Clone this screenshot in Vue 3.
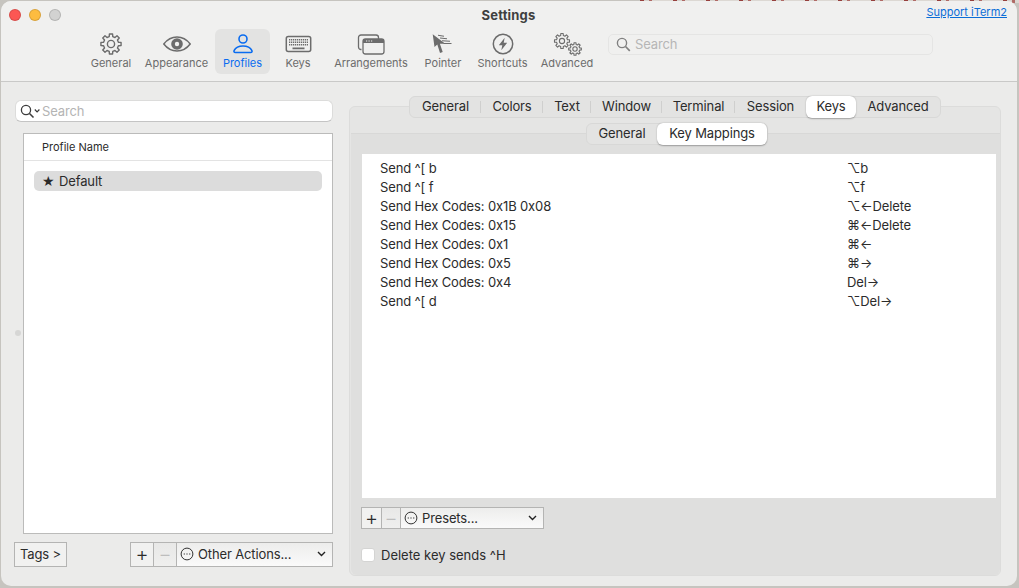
<template>
  <div class="desktop">
    <div class="terminal-peek"></div>
    <div class="window">
      <header class="toolbar">
        <div class="titlebar">
          <div class="lights">
            <span class="light red"></span>
            <span class="light yellow"></span>
            <span class="light grey"></span>
          </div>
          <div class="title">Settings</div>
          <a class="support">Support iTerm2</a>
        </div>
        <div class="tools">
          <div
            v-for="t in tools"
            :key="t.name"
            class="tool"
            :class="{ active: t.name === 'Profiles' }"
            :style="{ width: t.width + 'px' }"
          >
            <svg class="tool-icon" width="30" height="24" viewBox="0 0 30 24" fill="none" stroke="currentColor">
              <template v-if="t.name === 'General'">
                <path :d="gear(15, 12, 10.2, 7.6, 8)" stroke-width="1.4" stroke-linejoin="round" />
                <circle cx="15" cy="12" r="3.6" stroke-width="1.4" />
              </template>
              <template v-else-if="t.name === 'Appearance'">
                <path d="M1.8 12C5.5 7.2 10 5 15 5s9.500 2.200 13.200 7C24.500 16.800 20 19 15 19S5.500 16.800 1.800 12Z" stroke-width="1.5" />
                <circle cx="15" cy="12" r="5.800" fill="currentColor" stroke="none" />
                <circle cx="15" cy="12" r="2.200" fill="#f0f0ef" stroke="none" />
              </template>
              <template v-else-if="t.name === 'Profiles'">
                <circle cx="15" cy="7" r="4" stroke-width="1.600" />
                <path d="M7.500 20.500c-1.500 0-1.900-1-1.300-2.200 1.400-2.800 4.600-4.300 8.800-4.300s7.400 1.500 8.800 4.300c.6 1.200.2 2.200-1.300 2.200Z" stroke-width="1.600" />
              </template>
              <template v-else-if="t.name === 'Keys'">
                <rect x="3.300" y="4.500" width="24.400" height="15" rx="2" stroke-width="1.500" />
                <path d="M6 7.700h19M6 10.200h19M6 12.700h19" stroke-width="1.600" stroke-dasharray="1.300 .7" />
                <path d="M9.500 16.300h12" stroke-width="1.800" />
              </template>
              <template v-else-if="t.name === 'Arrangements'">
                <path d="M5.500 17.500H5a2.500 2.500 0 0 1-2.500-2.500V5.500A2.500 2.500 0 0 1 5 3h15a2.500 2.500 0 0 1 2.500 2.500V7" stroke-width="1.300" />
                <rect x="7" y="7" width="21" height="15" rx="2.500" stroke-width="1.300" />
                <path d="M7 8.500a1.500 1.500 0 0 1 1.500-1.500h18a1.500 1.500 0 0 1 1.500 1.500V11H7Z" fill="currentColor" stroke="none" />
                <path d="M10 9h1.200M12.500 9h1.200M15 9h1.200" stroke="#f0f0ef" stroke-width="1.200" />
              </template>
              <template v-else-if="t.name === 'Pointer'">
                <path d="M4.700 2.300 6.500 15 9.300 12.600 12 21l2.700-1-2.800-8.200 5.400-.1Z" fill="currentColor" stroke="none" />
                <path d="M10 3.200l6 1M12 6l7 .8M14 8.800l8 .5M15.500 11.500h8" stroke-width="1.100" />
              </template>
              <template v-else-if="t.name === 'Shortcuts'">
                <circle cx="15" cy="12" r="9.700" stroke-width="1.500" />
                <path d="M16.700 5.800 10.800 13.200h3.500l-1 5 5.900-7.400h-3.500Z" fill="currentColor" stroke="none" />
              </template>
              <template v-else-if="t.name === 'Advanced'">
                <path :d="gear(10, 9, 7.600, 5.600, 8)" stroke-width="1.100" stroke-linejoin="round" />
                <circle cx="10" cy="9" r="2.600" stroke-width="1.100" />
                <path :d="gear(23, 17, 6.400, 4.700, 8)" stroke-width="1.100" stroke-linejoin="round" />
                <circle cx="23" cy="17" r="2.200" stroke-width="1.100" />
              </template>
            </svg>
            <span class="tool-label">{{ t.name }}</span>
          </div>
          <div class="tool-search">
            <svg width="15" height="15" viewBox="0 0 15 15" fill="none" stroke="#808080" stroke-width="1.400">
              <circle cx="6" cy="6" r="4.600" />
              <path d="m9.500 9.500 4.300 4.300" stroke-width="1.700" />
            </svg>
            <span>Search</span>
          </div>
        </div>
      </header>

      <div class="content">
        <span class="splitter"></span>
        <section class="profiles">
          <div class="profile-search">
            <svg width="20" height="15" viewBox="0 0 20 15" fill="none" stroke="#3c3c3c">
              <circle cx="6" cy="6" r="4.600" stroke-width="1.300" />
              <path d="m9.500 9.500 4 4" stroke-width="1.600" />
              <path d="m14.800 5.500 2.300 2.300 2.300-2.300" stroke-width="1.200" />
            </svg>
            <span>Search</span>
          </div>
          <div class="profile-table">
            <div class="profile-head">Profile Name</div>
            <div class="profile-row">
              <span class="star">★</span>
              <span>Default</span>
            </div>
          </div>
          <div class="profile-actions">
            <button class="btn tags">Tags &gt;</button>
            <div class="group">
              <button class="btn plus">+</button>
              <button class="btn minus">−</button>
              <div class="btn popup">
                <svg width="16" height="16" viewBox="0 0 16 16" fill="none" stroke="#333">
                  <circle cx="8" cy="8" r="5.900" stroke-width="1" />
                  <path d="M4.700 8h1.200M7.400 8h1.200M10.100 8h1.200" stroke-width="1.200" />
                </svg>
                <span class="popup-text">Other Actions...</span>
                <svg class="chev" width="9" height="6" viewBox="0 0 9 6" fill="none" stroke="#222" stroke-width="1.400">
                  <path d="m1 1 3.500 3.500L8 1" />
                </svg>
              </div>
            </div>
          </div>
        </section>

        <section class="panel">
          <div class="seg tabs">
            <span
              v-for="(t, i) in tabs"
              :key="t.name"
              class="seg-item"
              :class="{ on: t.name === 'Keys', sep: i < 5 }"
              :style="{ width: t.width + 'px' }"
            >{{ t.name }}</span>
          </div>
          <div class="inner">
            <div class="seg subtabs">
              <span class="seg-item general">General</span>
              <span class="seg-item on mappings">Key Mappings</span>
            </div>
            <div class="mappings-table">
              <div v-for="m in mappings" :key="m.action + m.key" class="mapping">
                <span>{{ m.action }}</span>
                <span class="combo">{{ m.key }}</span>
              </div>
            </div>
            <div class="group presets">
              <button class="btn plus">+</button>
              <button class="btn minus">−</button>
              <div class="btn popup">
                <svg width="16" height="16" viewBox="0 0 16 16" fill="none" stroke="#333">
                  <circle cx="8" cy="8" r="5.900" stroke-width="1" />
                  <path d="M4.700 8h1.200M7.400 8h1.200M10.100 8h1.200" stroke-width="1.200" />
                </svg>
                <span class="popup-text">Presets...</span>
                <svg class="chev" width="9" height="6" viewBox="0 0 9 6" fill="none" stroke="#222" stroke-width="1.400">
                  <path d="m1 1 3.500 3.500L8 1" />
                </svg>
              </div>
            </div>
            <label class="check">
              <span class="box"></span>
              <span class="check-label">Delete key sends ^H</span>
            </label>
          </div>
        </section>
      </div>
    </div>
  </div>
</template>

<script setup>
const tools = [
  { name: 'General', width: 54 },
  { name: 'Appearance', width: 77 },
  { name: 'Profiles', width: 55 },
  { name: 'Keys', width: 56 },
  { name: 'Arrangements', width: 90 },
  { name: 'Pointer', width: 54 },
  { name: 'Shortcuts', width: 65 },
  { name: 'Advanced', width: 64 },
]

const tabs = [
  { name: 'General', width: 71 },
  { name: 'Colors', width: 62 },
  { name: 'Text', width: 48 },
  { name: 'Window', width: 71 },
  { name: 'Terminal', width: 73 },
  { name: 'Session', width: 71 },
  { name: 'Keys', width: 50 },
  { name: 'Advanced', width: 84 },
]

const mappings = [
  { action: 'Send ^[ b', key: '⌥b' },
  { action: 'Send ^[ f', key: '⌥f' },
  { action: 'Send Hex Codes: 0x1B 0x08', key: '⌥←Delete' },
  { action: 'Send Hex Codes: 0x15', key: '⌘←Delete' },
  { action: 'Send Hex Codes: 0x1', key: '⌘←' },
  { action: 'Send Hex Codes: 0x5', key: '⌘→' },
  { action: 'Send Hex Codes: 0x4', key: 'Del→' },
  { action: 'Send ^[ d', key: '⌥Del→' },
]

// outline of a cog wheel, used by the General and Advanced icons
function gear(cx, cy, outer, inner, teeth) {
  const step = (Math.PI * 2) / teeth
  const pts = []
  for (let i = 0; i < teeth; i++) {
    const a = i * step - Math.PI / 2
    const w = step * 0.2
    const v = step * 0.3
    pts.push([a - v, inner], [a - w, outer], [a + w, outer], [a + v, inner])
  }
  return (
    'M' +
    pts
      .map(([a, r]) => (cx + Math.cos(a) * r).toFixed(2) + ' ' + (cy + Math.sin(a) * r).toFixed(2))
      .join('L') +
    'Z'
  )
}
</script>

<style>
html,
body {
  margin: 0;
  overflow: hidden;
}
</style>

<style scoped>
.desktop {
  position: relative;
  box-sizing: border-box;
  width: 1019px;
  height: 588px;
  padding: 1px 2px 2px 1px;
  background: #c6c4bf;
  font-family: Inter, "DejaVu Sans", sans-serif;
  font-size: 13px;
  letter-spacing: -0.13px;
  color: #2b2b2b;
}

.terminal-peek {
  position: absolute;
  top: 0;
  left: 640px;
  right: 0;
  height: 3px;
  background: repeating-linear-gradient(90deg, #96403d 0 4px, #d6d2cd 4px 9px, #b06a66 9px 12px, #dcd8d3 12px 33px);
}

.window {
  position: relative;
  display: flex;
  flex-direction: column;
  height: 100%;
  border-radius: 10px;
  overflow: hidden;
  background: #ebebea;
}

.toolbar {
  flex: none;
  height: 80px;
  background: #f0f0ef;
  border-bottom: 1px solid #c9c9c8;
}

.titlebar {
  display: grid;
  grid-template-columns: 1fr auto 1fr;
  align-items: center;
  height: 28px;
}

.lights {
  display: flex;
  gap: 8px;
  padding-left: 8px;
}

.light {
  box-sizing: border-box;
  width: 12px;
  height: 12px;
  border-radius: 50%;
  border: 0.5px solid rgba(0, 0, 0, 0.14);
}

.red {
  background: #fc5753;
}

.yellow {
  background: #fdbc40;
}

.grey {
  background: #d2d2d1;
}

.title {
  font-weight: 700;
  letter-spacing: 0.2px;
  color: #3f3f3f;
  margin-left: -1px;
}

.support {
  justify-self: end;
  margin-right: 10px;
  margin-top: -6px;
  font-size: 11px;
  letter-spacing: 0;
  color: #0b6dd7;
  text-decoration: underline;
}

.tools {
  display: flex;
  align-items: flex-start;
  padding-left: 83px;
}

.tool {
  display: flex;
  flex-direction: column;
  align-items: center;
  flex: none;
  height: 45px;
  padding-top: 3px;
  box-sizing: border-box;
  border-radius: 6px;
  color: #6c6c6c;
}

.tool.active {
  background: #e3e3e2;
  color: #0a6cf0;
}

.tool-label {
  margin-top: 1px;
  font-size: 11px;
  line-height: 13px;
  letter-spacing: 0;
  white-space: nowrap;
}

.tool-search {
  display: flex;
  align-items: center;
  gap: 4px;
  box-sizing: border-box;
  width: 325px;
  height: 21px;
  margin: 5px 0 0 9px;
  padding: 0 0 1px 7px;
  border: 1px solid #e5e5e4;
  border-radius: 5px;
  color: #b6b6b6;
}

.content {
  flex: 1;
  display: flex;
  position: relative;
  min-height: 0;
}

.splitter {
  position: absolute;
  left: 14px;
  top: 248px;
  width: 6px;
  height: 6px;
  border-radius: 50%;
  background: #d6d6d5;
}

.profiles {
  display: flex;
  flex-direction: column;
  flex: none;
  box-sizing: border-box;
  width: 319px;
  margin-left: 13px;
  padding: 18px 0 19px;
}

.profile-search {
  display: flex;
  align-items: center;
  gap: 2px;
  box-sizing: border-box;
  flex: none;
  height: 22px;
  padding-left: 4px;
  margin-left: 1px;
  background: #fff;
  border: 1px solid #dcdcdb;
  border-bottom-color: #c4c4c4;
  border-radius: 6px;
  color: #b4b4b4;
}

.profile-table {
  flex: 1;
  margin: 11px 0 0 9px;
  background: #fff;
  border: 1px solid #bbbbba;
}

.profile-head {
  height: 27px;
  box-sizing: border-box;
  padding: 6px 0 0 18px;
  font-size: 11px;
  line-height: 15px;
  letter-spacing: 0;
  border-bottom: 1px solid #e3e3e3;
}

.profile-row {
  display: flex;
  align-items: center;
  gap: 4px;
  height: 20px;
  margin: 10px 10px 0;
  padding-left: 8px;
  border-radius: 5px;
  background: #dcdcdc;
}

.star {
  font-family: "DejaVu Sans", sans-serif;
  font-size: 14px;
  width: 13px;
}

.profile-actions {
  display: flex;
  justify-content: space-between;
  flex: none;
  height: 25px;
  margin: 8px 0 0;
}

.group {
  display: flex;
  height: 100%;
}

.btn {
  box-sizing: border-box;
  height: 100%;
  margin: 0;
  padding: 0 0 1px;
  border: 1px solid #b4b4b3;
  background: linear-gradient(#ededec, #fafafa);
  font: inherit;
  letter-spacing: inherit;
  color: #2b2b2b;
}

.tags {
  width: 53px;
  background: #f1f1f0;
}

.plus {
  width: 24px;
  font-size: 20px;
  line-height: 1;
  font-weight: 300;
  background: #f1f1f0;
}

.minus {
  width: 23px;
  margin-left: -1px;
  font-size: 20px;
  line-height: 1;
  font-weight: 300;
  color: #bdbdbd;
  background: linear-gradient(#e8e8e7, #efefee);
  border-right: 0;
}

.popup {
  display: flex;
  align-items: center;
  width: 157px;
  padding: 0 6px 1px 2px;
}

.popup-text {
  flex: 1;
  margin-left: 3px;
}

.panel {
  display: flex;
  flex-direction: column;
  flex: none;
  box-sizing: border-box;
  width: 652px;
  margin: 24px 0 10px 16px;
  background: #e5e5e4;
  border: 1px solid #dcdcdb;
  border-radius: 6px;
}

.seg {
  display: flex;
  align-self: center;
  flex: none;
  height: 22px;
  box-sizing: border-box;
  background: #e3e3e2;
  border: 1px solid #d8d8d7;
  border-radius: 6px;
}

.seg-item {
  display: flex;
  align-items: center;
  justify-content: center;
  position: relative;
  flex: none;
  padding-bottom: 2px;
  box-sizing: border-box;
}

.seg-item.on {
  margin: -1px 0;
  background: #fff;
  border-radius: 6px;
  box-shadow: 0 0.5px 1.5px rgba(0, 0, 0, 0.3);
}

.seg-item.sep::after {
  content: '';
  position: absolute;
  right: 0;
  top: 4px;
  bottom: 4px;
  width: 1px;
  background: #cfcfce;
}

.tabs {
  margin-top: -11px;
}

.inner {
  flex: 1;
  display: flex;
  flex-direction: column;
  min-height: 0;
  margin: 15px 0 0 1px;
  background: #dfdfde;
  border-top: 1px solid #d8d8d7;
  border-radius: 0 0 6px 6px;
}

.subtabs {
  margin: -11px 0 0 3px;
}

.general {
  width: 70px;
}

.mappings {
  width: 110px;
}

.mappings-table {
  flex: 1;
  min-height: 0;
  margin: 9px 4px 0 11px;
  padding-top: 5px;
  background: #fff;
}

.mapping {
  display: grid;
  grid-template-columns: 467px 1fr;
  height: 19px;
  line-height: 19px;
  padding-left: 18px;
}

.combo {
  letter-spacing: -0.1px;
}

.presets {
  flex: none;
  height: 22px;
  margin: 9px 0 0 10px;
}

.presets .plus {
  width: 21px;
}

.presets .minus {
  width: 19px;
}

.presets .popup {
  width: 144px;
}

.check {
  display: flex;
  align-items: center;
  gap: 6px;
  flex: none;
  height: 14px;
  margin: 19px 0 13px 10px;
}

.check-label {
  padding-bottom: 1px;
  letter-spacing: 0;
}

.box {
  box-sizing: border-box;
  width: 14px;
  height: 14px;
  background: #fff;
  border: 1px solid #d4d4d3;
  border-radius: 3px;
}
</style>
